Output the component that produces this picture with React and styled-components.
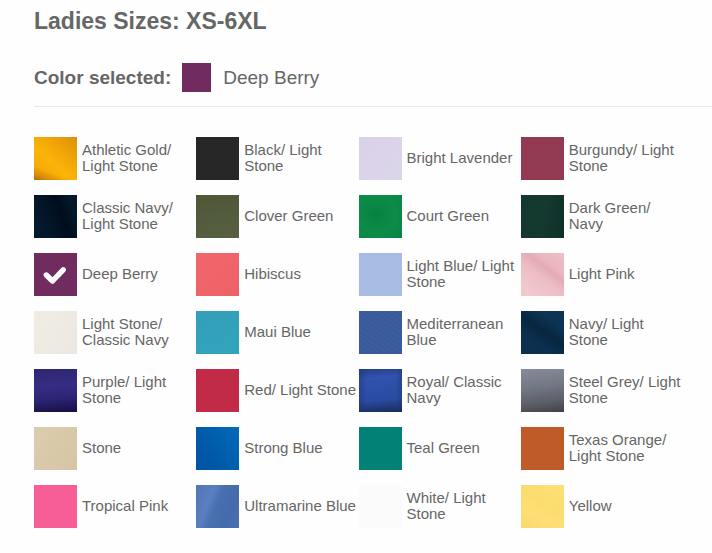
import React, { useState } from "react";
import styled, { createGlobalStyle } from "styled-components";

const GlobalStyle = createGlobalStyle`
  * { box-sizing: border-box; }
  body {
    margin: 0;
    background: #fefefe;
    color: #666;
    font-family: "Liberation Sans", Arial, sans-serif;
  }
`;

const colors = [
  ["Athletic Gold/ Light Stone", "linear-gradient(22deg, #b06a0c 0%, #d98a08 10%, transparent 24%), linear-gradient(40deg, #f5a906 15%, #fab409 42%, #f3a806 62%, #dd8f08 100%)"],
  ["Black/ Light Stone", "#272727"],
  ["Bright Lavender", "linear-gradient(120deg, #d9d1e8, #dbd5ea)"],
  ["Burgundy/ Light Stone", "#923a51"],
  ["Classic Navy/ Light Stone", "linear-gradient(70deg, #021a2c 20%, #021222 48%, #000d1c 62%, #03192b 85%)"],
  ["Clover Green", "linear-gradient(170deg, #4f5738, #566040)"],
  ["Court Green", "radial-gradient(circle at 40% 45%, #078240, #0c8c48 55%, #088443)"],
  ["Dark Green/ Navy", "linear-gradient(100deg, #12372f, #143a30 50%, #0f3029)"],
  ["Deep Berry", "#702c5f"],
  ["Hibiscus", "linear-gradient(135deg, #f0666b, #ef6167)"],
  ["Light Blue/ Light Stone", "#a7bbe3"],
  ["Light Pink", "linear-gradient(37deg, #f1c8ce 15%, #edbcc5 46%, #e4abb6 62%, #eab6c0 72%, #f0bfc8)"],
  ["Light Stone/ Classic Navy", "linear-gradient(120deg, #f0ede5, #ece8e1)"],
  ["Maui Blue", "linear-gradient(160deg, #339fb8, #31a5bd)"],
  ["Mediterranean Blue", "repeating-linear-gradient(35deg, #3b5c9e 0 2px, #38599a 2px 4px)"],
  ["Navy/ Light Stone", "linear-gradient(35deg, #0b3050 30%, #08263f 53%, #0c3454 75%)"],
  ["Purple/ Light Stone", "linear-gradient(175deg, #2d2670 0%, #352d83 40%, #2d2474 68%, #150f42 100%)"],
  ["Red/ Light Stone", "#c12b47"],
  ["Royal/ Classic Navy", "linear-gradient(90deg, #17306b66, transparent 18% 85%, #17306b66), linear-gradient(175deg, #24408b 0%, #3152ad 22%, #2b4ba2 70%, #172b5c 100%)"],
  ["Steel Grey/ Light Stone", "linear-gradient(172deg, #878c9b 0%, #737885 40%, #5c5e67 75%, #404047 100%)"],
  ["Stone", "linear-gradient(120deg, #dacdae, #d6c5a4)"],
  ["Strong Blue", "linear-gradient(55deg, #0055a4 20%, #0061b0 65%, #056ab7)"],
  ["Teal Green", "#028176"],
  ["Texas Orange/ Light Stone", "#bf5b28"],
  ["Tropical Pink", "#f75d96"],
  ["Ultramarine Blue", "linear-gradient(112deg, #5277b6 5%, #5a80c1 32%, #486fb0 48%, #456baa 75%, #4a70b1)"],
  ["White/ Light Stone", "#fbfbfc"],
  ["Yellow", "linear-gradient(25deg, #f8d76d, #ffdf75 30%, #fbdc6e 60%, #ffe078)"],
].map(([name, fill]) => ({ name, fill }));

const Page = styled.main`
  padding: 7px 0 24px 34px;
`;

const Title = styled.h1`
  margin: 0;
  font-size: 23px;
  line-height: 28px;
`;

const Selection = styled.div`
  display: flex;
  align-items: center;
  padding: 28px 0 14px;
  border-bottom: 1px solid #e8e8e8;
  font-size: 19px;
  line-height: 29px;
`;

const SelectedSwatch = styled.span`
  width: 29px;
  height: 29px;
  margin: 0 12px 0 11px;
  background: ${({ $fill }) => $fill};
`;

const ColorGrid = styled.fieldset`
  display: grid;
  grid-template-columns: repeat(4, minmax(0, 1fr));
  row-gap: 15px;
  min-width: 0;
  margin: 30px 29px 0 0;
  padding: 0;
  border: 0;
`;

const Option = styled.label`
  display: flex;
  align-items: center;
  gap: 5px;
  min-height: 43px;
  cursor: pointer;
  font-size: 15px;
  line-height: 16px;
`;

const OptionName = styled.span`
  padding-bottom: 2px;
`;

const SwatchBox = styled.span`
  display: grid;
  flex: none;
  place-items: center;

  > * { grid-area: 1 / 1; }
`;

const Swatch = styled.input`
  appearance: none;
  width: 43px;
  height: 43px;
  margin: 0;
  background: ${({ $fill }) => $fill};
  cursor: pointer;

  &:focus-visible { outline: 2px solid #666; outline-offset: 2px; }
`;

const Check = styled.svg`
  z-index: 1;
  width: 43px;
  height: 43px;
  pointer-events: none;
`;

function ColorOption({ color, selected, onSelect }) {
  return (
    <Option>
      <SwatchBox>
        <Swatch
          type="radio"
          name="color"
          value={color.name}
          checked={selected}
          onChange={onSelect}
          $fill={color.fill}
        />
        {selected && (
          <Check viewBox="0 0 43 43" aria-hidden="true">
            <path
              d="M12.3 22 18.5 28 29.2 16.8"
              fill="none"
              stroke="#fff"
              strokeWidth="5.4"
              strokeLinecap="round"
              strokeLinejoin="round"
            />
          </Check>
        )}
      </SwatchBox>
      <OptionName>{color.name}</OptionName>
    </Option>
  );
}

export default function App() {
  const [selectedName, setSelectedName] = useState("Deep Berry");
  const selected = colors.find((color) => color.name === selectedName);

  return (
    <>
      <GlobalStyle />
      <Page>
        <Title>Ladies Sizes: XS-6XL</Title>
        <Selection>
          <strong>Color selected:</strong>
          <SelectedSwatch $fill={selected.fill} />
          <span>{selected.name}</span>
        </Selection>
        <ColorGrid aria-label="Color">
          {colors.map((color) => (
            <ColorOption
              key={color.name}
              color={color}
              selected={color.name === selectedName}
              onSelect={() => setSelectedName(color.name)}
            />
          ))}
        </ColorGrid>
      </Page>
    </>
  );
}
